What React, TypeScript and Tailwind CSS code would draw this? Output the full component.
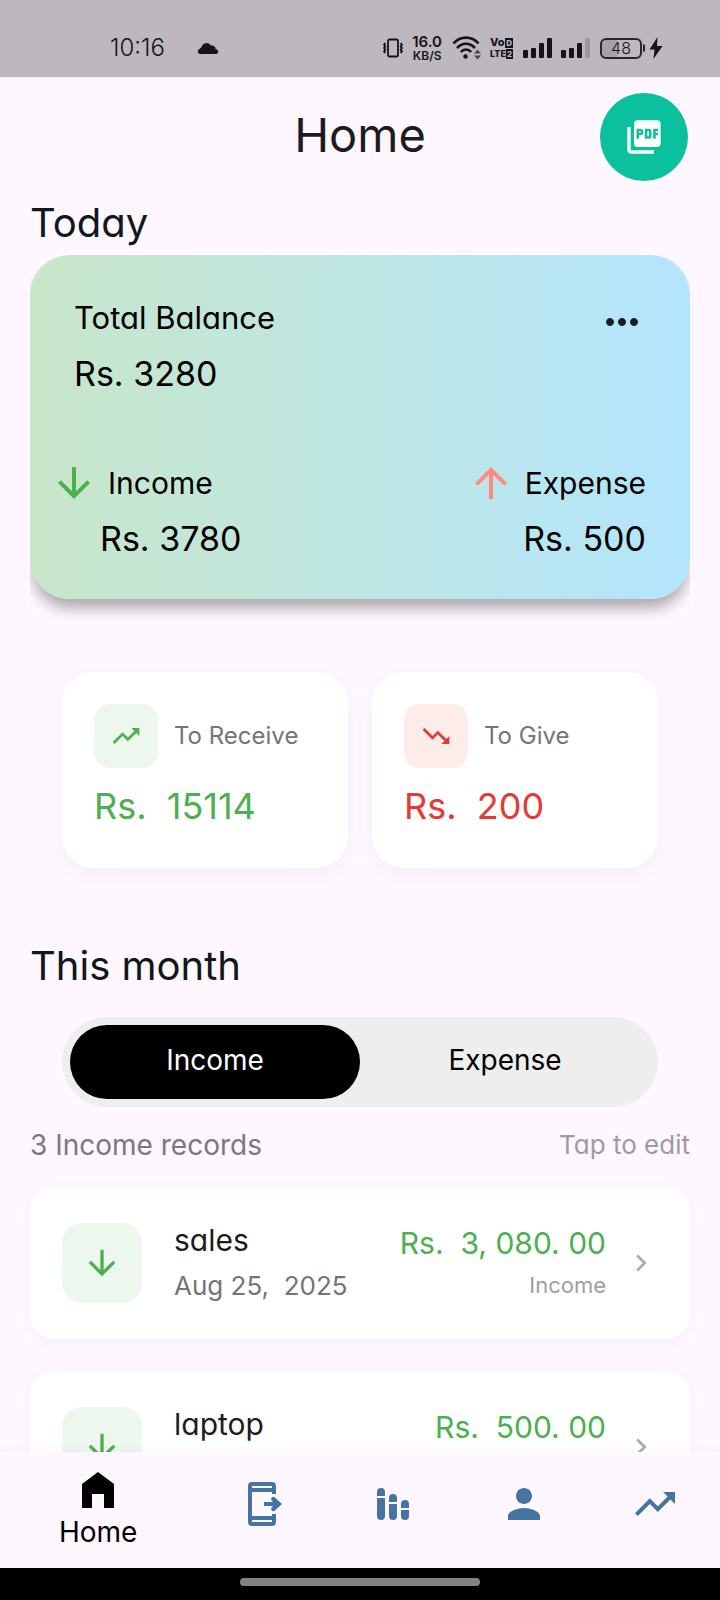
import React, { useState } from "react";
import {
  MdArrowDownward,
  MdArrowUpward,
  MdChevronRight,
  MdMoreHoriz,
  MdPerson,
  MdPictureAsPdf,
  MdTrendingDown,
  MdTrendingUp,
} from "react-icons/md";

type Kind = "Income" | "Expense";

const records = [
  { name: "sales", date: "Aug 25,  2025", amount: "Rs.  3, 080. 00" },
  { name: "laptop", date: "Aug 25,  2025", amount: "Rs.  500. 00" },
];

function VibrateIcon() {
  return (
    <svg width="22" height="20" viewBox="0 0 22 20" fill="none" stroke="#17131a" aria-hidden="true">
      <rect x="6" y="1.5" width="10" height="17" rx="1.5" strokeWidth="1.8" />
      <path d="M3.200 5l-1 1.700 1 1.700-1 1.700 1 1.700-1 1.700 1 1.500M18.800 5l1 1.700-1 1.700 1 1.700-1 1.700 1 1.700-1 1.500" strokeWidth="2" />
    </svg>
  );
}

function WifiIcon() {
  return (
    <svg width="30" height="24" viewBox="0 0 30 24" fill="none" stroke="#17131a" aria-hidden="true">
      <path d="M1.500 7.500C8.500-.3 19.500-.3 26.500 7.500" strokeWidth="2.600" />
      <path d="M5 12c5.200-5.600 12.800-5.600 18 0" strokeWidth="2.600" />
      <path d="M8.800 16c3-3.300 7.400-3.300 10.400 0" strokeWidth="2.600" />
      <circle cx="13.500" cy="20.500" r="2.200" fill="#17131a" stroke="none" />
      <path d="M22 17.500l3.500-4 3.500 4zM22 19.500l3.500 4 3.500-4z" fill="#4b464e" stroke="none" />
    </svg>
  );
}

function SignalIcon({ weak = false }: { weak?: boolean }) {
  return (
    <svg width="29" height="20" viewBox="0 0 29 20" fill="#17131a" aria-hidden="true">
      <rect x="0" y="12" width="5" height="8" rx="1" />
      <rect x="8" y="10" width="5" height="10" rx="1" />
      <rect x="16" y="5" width="5" height="15" rx="1" />
      <rect x="24" y="0" width="5" height="20" rx="1" fill={weak ? "#9c969e" : "#17131a"} />
    </svg>
  );
}

function StatusBar() {
  return (
    <div className="flex h-[77px] shrink-0 items-end justify-between bg-[#bdb8be] pr-[57px] pb-[15px] pl-[110px] text-[#17131a]">
      <div className="flex h-7 items-center gap-8">
        <span className="text-[24px] leading-7 font-light">10:16</span>
        <svg width="22" height="12" viewBox="0 0 22 12" fill="#17131a" aria-hidden="true">
          <path d="M3 12a2.600 2.600 0 0 1-.4-5.100C3 6 3.800 5.600 4.400 5.400A5.200 5.200 0 0 1 14 3.600a3.600 3.600 0 0 1 4.600 3.700A2.400 2.400 0 0 1 19.500 12z" />
        </svg>
      </div>
      <div className="flex h-7 items-center">
        <VibrateIcon />
        <span className="ml-2 flex flex-col items-center font-semibold">
          <span className="text-[15px] leading-4">16.0</span>
          <span className="text-[12px] leading-3">KB/S</span>
        </span>
        <span className="ml-[10px]">
          <WifiIcon />
        </span>
        <span className="ml-2 flex flex-col text-[11px] leading-[11px] font-extrabold">
          <span className="flex h-[11px] items-center justify-between">
            Vo<span className="bg-[#17131a] px-px text-[8px] leading-[10px] text-[#bdb8be]">D</span>
          </span>
          <span className="flex h-[11px] items-center text-[9px]">
            LTE<span className="bg-[#17131a] px-px text-[8px] leading-[10px] text-[#bdb8be]">2</span>
          </span>
        </span>
        <span className="ml-[10px] flex gap-[9px]">
          <SignalIcon />
          <SignalIcon weak />
        </span>
        <span className="ml-[10px] flex h-[21px] w-[42px] items-center justify-center rounded-md border-2 border-[#2b262d] bg-gradient-to-r from-[#a7a1a8] from-40% to-[#bdb8be] to-40% text-[16px] leading-4 font-light">
          48
        </span>
        <span className="ml-px h-2 w-[2px] rounded-r bg-[#2b262d]" />
        <svg className="ml-1" width="14" height="22" viewBox="0 0 14 22" fill="#17131a" aria-hidden="true">
          <path d="M8.500 0L.5 12.500h5L4.500 22l9-13H8z" />
        </svg>
      </div>
    </div>
  );
}

function MiniCard({
  label,
  amount,
  tint,
  color,
  icon,
}: {
  label: string;
  amount: string;
  tint: string;
  color: string;
  icon: React.ReactNode;
}) {
  return (
    <div className="flex-1 rounded-[32px] bg-white px-8 pt-8 pb-[38px] shadow-[0_6px_20px_rgba(60,0,80,0.04)]">
      <div className="flex items-center gap-4">
        <span className={`flex size-16 shrink-0 items-center justify-center rounded-2xl ${tint} ${color}`}>{icon}</span>
        <span className="text-[24px] leading-8 whitespace-nowrap text-[#757575]">{label}</span>
      </div>
      <p className={`mt-[14px] text-[36px] leading-[48px] whitespace-pre ${color}`}>{amount}</p>
    </div>
  );
}

function HomeIcon() {
  return (
    <svg className="size-12" viewBox="0 0 24 24" fill="currentColor" aria-hidden="true">
      <path d="M4 21V9l8-6 8 6v12h-5v-7H9v7z" />
    </svg>
  );
}

function SendIcon() {
  return (
    <svg className="size-12" viewBox="0 0 24 24" fill="currentColor" aria-hidden="true">
      <path
        fillRule="evenodd"
        d="M7 1h10a2 2 0 0 1 2 2v4h-2V6H7v12h10v-1h2v4a2 2 0 0 1-2 2H7a2 2 0 0 1-2-2V3a2 2 0 0 1 2-2zm0 2v1h10V3zm0 17v1h10v-1z"
      />
      <path d="M13 11h4.500l-.6-.6a1.100 1.100 0 0 1 0-1.600 1.100 1.100 0 0 1 1.600 0L22 12l-3.500 3.200a1.100 1.100 0 0 1-1.600 0 1.100 1.100 0 0 1 0-1.600l.6-.6H13z" />
    </svg>
  );
}

function BarsIcon() {
  return (
    <svg className="size-12" viewBox="0 0 24 24" fill="currentColor" aria-hidden="true">
      <path d="M4 8V6a2 2 0 0 1 4 0v2zM4 9h4v9a2 2 0 0 1-4 0zM10 11V9a2 2 0 0 1 4 0v2zM10 12h4v6a2 2 0 0 1-4 0zM16 14v-2a2 2 0 0 1 4 0v2zM16 15h4v3a2 2 0 0 1-4 0z" />
    </svg>
  );
}

export default function App() {
  const [kind, setKind] = useState<Kind>("Income");

  return (
    <div className="flex h-screen flex-col overflow-hidden bg-[#fef7ff] font-['Inter','Liberation_Sans',sans-serif] text-black [font-feature-settings:'cv11']">
      <StatusBar />

      <main className="min-h-0 flex-1 overflow-y-auto [scrollbar-width:none]">
        <header className="grid grid-cols-[88px_1fr_88px] items-center px-8 pt-4 pb-3">
          <h1 className="col-start-2 pb-1 text-center text-[47px] leading-[56px] text-[#1d1b20]">Home</h1>
          <button
            type="button"
            aria-label="Export PDF"
            className="flex size-[88px] items-center justify-center rounded-full bg-[#0bc19d] text-white"
          >
            <MdPictureAsPdf className="size-10" />
          </button>
        </header>

        <div className="px-[30px]">
          <h2 className="pb-[2px] text-[40px] leading-[60px] text-[#0f1720]">Today</h2>
          <div className="overflow-hidden pb-6">
            <section className="rounded-[40px] bg-gradient-to-r from-[#c8e6c9] to-[#b3e5fc] pt-[43px] pb-10 shadow-[0_12px_14px_-2px_rgba(0,0,0,0.3)]">
              <div className="flex items-start justify-between px-[44px]">
                <div>
                  <p className="text-[31px] leading-10">Total Balance</p>
                  <p className="mt-4 text-[34px] leading-10">Rs. 3280</p>
                </div>
                <button type="button" aria-label="More options" className="text-[#1d1b20]">
                  <MdMoreHoriz className="size-12" />
                </button>
              </div>
              <div className="mt-[65px] flex justify-between pr-11 pl-5">
                <div>
                  <p className="flex items-center gap-[10px] text-[30px] leading-[48px]">
                    <MdArrowDownward className="size-12 text-[#4caf50]" />
                    Income
                  </p>
                  <p className="mt-3 pl-[50px] text-[34px] leading-10">Rs. 3780</p>
                </div>
                <div>
                  <p className="flex items-center gap-[10px] text-[30px] leading-[48px]">
                    <MdArrowUpward className="size-12 text-[#ff8a80]" />
                    Expense
                  </p>
                  <p className="mt-3 text-right text-[34px] leading-10">Rs. 500</p>
                </div>
              </div>
            </section>
          </div>
        </div>

        <div className="mt-[49px] flex gap-6 px-[62px]">
          <MiniCard
            label="To Receive"
            amount="Rs.  15114"
            tint="bg-[#edf7ee]"
            color="text-[#4caf50]"
            icon={<MdTrendingUp className="size-8" />}
          />
          <MiniCard
            label="To Give"
            amount="Rs.  200"
            tint="bg-[#feecea]"
            color="text-[#e53935]"
            icon={<MdTrendingDown className="size-8" />}
          />
        </div>

        <div className="px-[30px]">
          <h2 className="mt-[68px] text-[40px] leading-[60px] text-[#0f1720]">This month</h2>
          <div className="mx-8 mt-[21px] flex rounded-full bg-[#eeeeee] p-2">
            {(["Income", "Expense"] as Kind[]).map((k) => (
              <button
                key={k}
                type="button"
                aria-pressed={kind === k}
                onClick={() => setKind(k)}
                className={`h-[74px] flex-1 rounded-full pb-1 text-[28px] leading-10 ${
                  kind === k ? "bg-black text-white" : "text-black"
                }`}
              >
                {k}
              </button>
            ))}
          </div>
          <div className="mt-[18px] flex items-center justify-between leading-10">
            <span className="text-[28px] text-[#7c777e]">3 Income records</span>
            <span className="text-[26px] text-[#9f9aa1]">Tap to edit</span>
          </div>
          <ul className="mt-[22px] flex flex-col gap-8">
            {records.map((r) => (
              <li key={r.name}>
                <button
                  type="button"
                  className="flex min-h-[152px] w-full items-center rounded-3xl bg-white px-8 py-8 text-left shadow-[0_4px_16px_rgba(60,0,80,0.04)]"
                >
                  <span className="flex size-20 shrink-0 items-center justify-center rounded-[20px] bg-[#edf7ee] text-[#4caf50]">
                    <MdArrowDownward className="size-10" />
                  </span>
                  <span className="ml-8 flex flex-1 flex-col gap-[6px]">
                    <span className="text-[30px] leading-10 text-[#1c1c1c]">{r.name}</span>
                    <span className="text-[26px] leading-10 whitespace-pre text-[#757575]">{r.date}</span>
                  </span>
                  <span className="mr-[18px] flex flex-col items-end gap-2 pb-1">
                    <span className="text-[30px] leading-10 whitespace-pre text-[#4caf50]">{r.amount}</span>
                    <span className="text-[22px] leading-7 text-[#9e9e9e]">Income</span>
                  </span>
                  <MdChevronRight className="size-[34px] text-[#adadad]" />
                </button>
              </li>
            ))}
          </ul>
        </div>
      </main>

      <nav className="flex h-[116px] shrink-0 bg-[#fef7ff] text-[#4574a3] shadow-[0_-2px_8px_rgba(60,0,80,0.03)]">
        <a href="#home" className="flex flex-[3] flex-col items-center pt-[14px] text-black">
          <HomeIcon />
          <span className="text-[28px] leading-9">Home</span>
        </a>
        <a href="#send" aria-label="Transfers" className="flex flex-[2] items-center justify-center pb-3">
          <SendIcon />
        </a>
        <a href="#stats" aria-label="Statistics" className="flex flex-[2] items-center justify-center pb-3">
          <BarsIcon />
        </a>
        <a href="#profile" aria-label="Profile" className="flex flex-[2] items-center justify-center pb-3">
          <MdPerson className="size-12" />
        </a>
        <a href="#trends" aria-label="Trends" className="flex flex-[2] items-center justify-center pb-3">
          <MdTrendingUp className="size-12" />
        </a>
      </nav>

      <div className="flex h-8 shrink-0 items-center justify-center bg-black pb-1">
        <span className="h-2 w-1/3 rounded-full bg-[#828282]" />
      </div>
    </div>
  );
}
